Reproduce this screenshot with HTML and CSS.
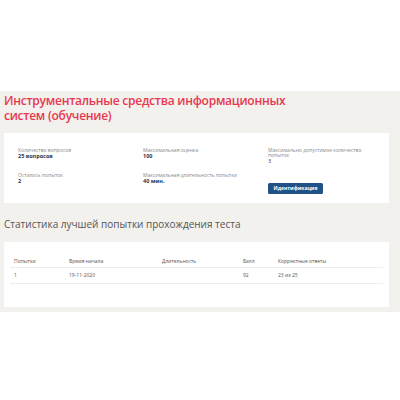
FILE: index.html
```html
<!DOCTYPE html>
<html lang="ru">
<head>
<meta charset="utf-8">
<link rel="stylesheet" href="styles.css">
</head>
<body>
<div class="top"></div>
<main class="main">
  <h1 class="title">Инструментальные средства информационных<br>систем (обучение)</h1>
  <section class="card info">
    <div class="item">
      <div class="label">Количество вопросов</div>
      <div class="value">25 вопросов</div>
    </div>
    <div class="item">
      <div class="label">Максимальная оценка</div>
      <div class="value">100</div>
    </div>
    <div class="item item-narrow">
      <div class="label">Максимально допустимое количество попыток</div>
      <div class="value">3</div>
    </div>
    <div class="item">
      <div class="label">Осталось попыток</div>
      <div class="value">2</div>
    </div>
    <div class="item">
      <div class="label">Максимальная длительность попытки</div>
      <div class="value">40 мин.</div>
    </div>
    <div class="item">
      <button class="btn" type="button">Идентификация</button>
    </div>
  </section>
  <h2 class="subtitle">Статистика лучшей попытки прохождения теста</h2>
  <section class="card stats">
    <table class="table">
      <thead>
        <tr><th class="c1">Попытки</th><th class="c2">Время начала</th><th class="c3">Длительность</th><th class="c4">Балл</th><th>Корректные ответы</th></tr>
      </thead>
      <tbody>
        <tr><td>1</td><td>19-11-2020</td><td></td><td>92</td><td>23 из 25</td></tr>
      </tbody>
    </table>
  </section>
</main>
</body>
</html>
```
FILE: styles.css
```css
html, body {
  margin: 0;
  padding: 0;
  background: #ffffff;
  font-family: "Open Sans", "Liberation Sans", sans-serif;
}
.top {
  height: 91px;
}
.main {
  background: #f2f1ee;
  padding: 1px 11px 5px 4px;
}
.title {
  margin: 0;
  color: #e8384f;
  font-size: 12px;
  letter-spacing: -0.25px;
  font-weight: 600;
  line-height: 15px;
  padding-top: 1px;
}
.card {
  background: #ffffff;
}
.info {
  margin-top: 10px;
  height: 70px;
  box-sizing: border-box;
  padding: 15px 0 0 14px;
  display: grid;
  grid-template-columns: 125px 125px 100px;
  grid-template-rows: 25px 24px;
}
.label {
  font-size: 5px;
  line-height: 5px;
  color: #8a8a8a;
}
.item-narrow .label {
  max-width: 95px;
}
.value {
  font-size: 5.5px;
  line-height: 6px;
  color: #2b3550;
  font-weight: 700;
}
.item-narrow .value {
  font-weight: 400;
}
.btn {
  margin-top: 1px;
  width: 55px;
  height: 11px;
  padding: 0;
  border: none;
  border-radius: 1.5px;
  background: #1f5286;
  color: #ffffff;
  font-family: "Open Sans", "Liberation Sans", sans-serif;
  font-size: 5px;
  font-weight: 700;
}
.subtitle {
  margin: 14px 0 0;
  font-size: 10px;
  line-height: 14px;
  font-weight: 400;
  color: #555555;
}
.stats {
  margin-top: 11px;
  height: 65px;
  box-sizing: border-box;
  padding: 14px 6px 0 6px;
}
.table {
  width: 100%;
  border-collapse: collapse;
  font-size: 5px;
  color: #555555;
}
.table th {
  font-weight: 400;
  text-align: left;
  padding: 3px 4px;
  border-bottom: 1px solid #ececec;
  line-height: 5px;
}
.table td {
  padding: 5px 4px;
  border-bottom: 1px solid #ececec;
  line-height: 5px;
}
.c1 { width: 47px; }
.c2 { width: 85px; }
.c3 { width: 73px; }
.c4 { width: 27px; }
```
